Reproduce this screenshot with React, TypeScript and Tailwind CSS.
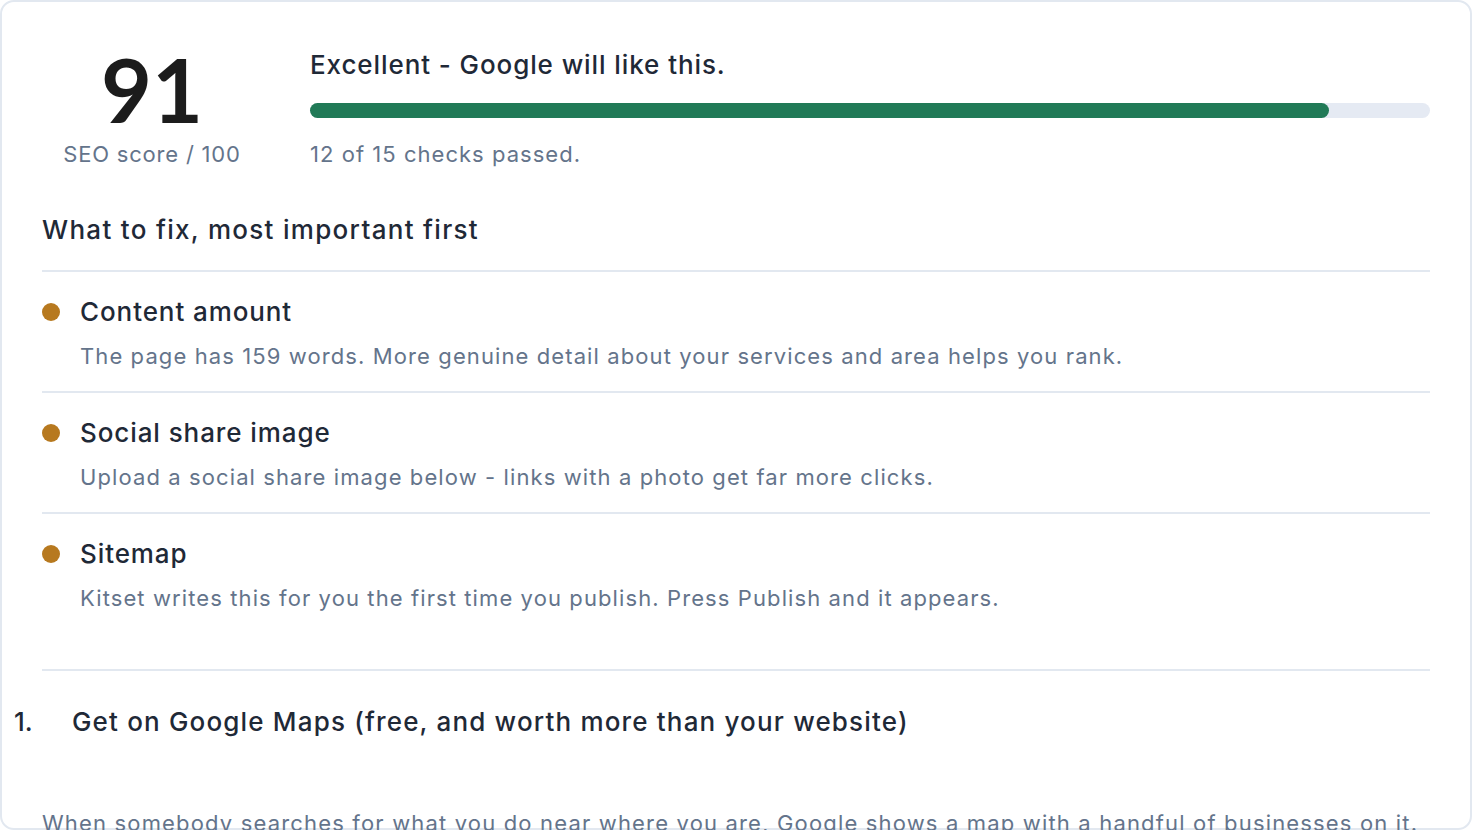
const issues = [
  {
    title: "Content amount",
    detail: "The page has 159 words. More genuine detail about your services and area helps you rank.",
  },
  {
    title: "Social share image",
    detail: "Upload a social share image below - links with a photo get far more clicks.",
  },
  {
    title: "Sitemap",
    detail: "Kitset writes this for you the first time you publish. Press Publish and it appears.",
  },
];

const score = 91;

export default function App() {
  return (
    <div className="min-h-screen bg-white font-['Inter',sans-serif]">
      <div className="h-[830px] rounded-[14px] border-2 border-[#e2e8f0] bg-white px-10 pt-[43px]">
        {/* score header */}
        <div className="flex items-start gap-12">
          <div className="w-[220px] shrink-0 text-center">
            <div className="font-['Lato',sans-serif] text-[88px] font-bold leading-[88px] text-[#1c1c1c]">{score}</div>
            <div className="mt-[5px] text-[22px] leading-8 tracking-[0.036em] text-[#64748b]">SEO score / 100</div>
          </div>
          <div className="flex-1 pt-[2px]">
            <h2 className="text-[26px] font-medium leading-9 tracking-[0.035em] text-[#1f2937]">
              Excellent - Google will like this.
            </h2>
            <div className="mt-[20px] h-[15px] w-full rounded-full bg-[#e5eaf3]">
              <div className="h-full rounded-full bg-[#217a57]" style={{ width: `${score}%` }} />
            </div>
            <p className="mt-[20px] text-[22px] leading-8 tracking-[0.047em] text-[#64748b]">12 of 15 checks passed.</p>
          </div>
        </div>

        <h3 className="mt-[42px] pb-[22px] text-[26px] font-medium leading-9 tracking-[0.05em] text-[#1f2937]">
          What to fix, most important first
        </h3>

        <ul className="border-t-2 border-[#e2e8f0]">
          {issues.map((item, i) => (
            <li
              key={item.title}
              className={`pt-6 pb-[19px] ${i < issues.length - 1 ? "border-b-2 border-[#e2e8f0]" : ""}`}
            >
              <div className="flex items-center gap-5">
                <span className="h-[18px] w-[18px] shrink-0 rounded-full bg-[#b7791f]" />
                <span className="text-[26px] font-medium leading-8 tracking-[0.035em] text-[#1f2937]">{item.title}</span>
              </div>
              <p className="mt-3 pl-[38px] text-[22px] leading-8 tracking-[0.05em] text-[#64748b]">{item.detail}</p>
            </li>
          ))}
        </ul>

        <section className="mt-[36px] border-t-2 border-[#e2e8f0] pt-[33px]">
          <div className="-ml-7 flex items-center">
            <span className="w-[58px] shrink-0 text-[26px] font-medium leading-9 text-[#1f2937]">1.</span>
            <h3 className="text-[26px] font-medium leading-9 tracking-[0.045em] text-[#1f2937]">
              Get on Google Maps (free, and worth more than your website)
            </h3>
          </div>
          <p className="mt-[67px] text-[22px] leading-8 tracking-[0.053em] text-[#64748b]">
            When somebody searches for what you do near where you are, Google shows a map with a handful of businesses on it.
            Being one of them brings in calls without you lifting a finger.
          </p>
        </section>
      </div>
    </div>
  );
}
